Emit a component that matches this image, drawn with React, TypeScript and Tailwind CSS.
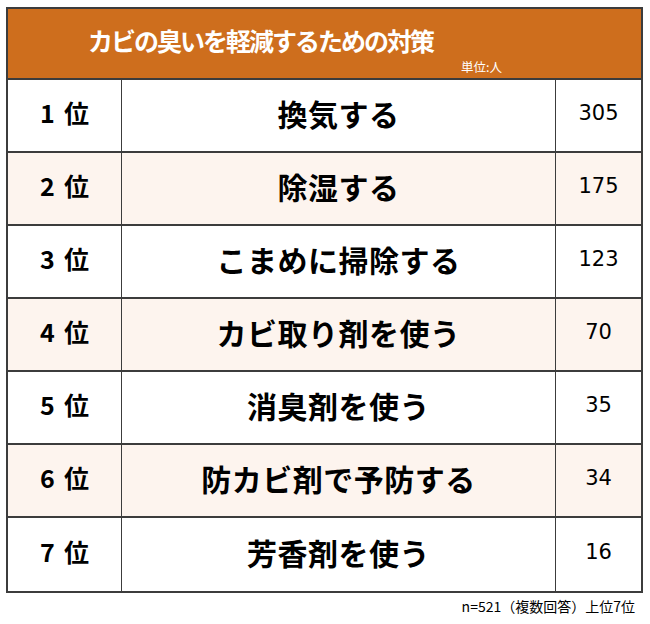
const rows = [
  { rank: 1, label: '換気する', count: 305 },
  { rank: 2, label: '除湿する', count: 175 },
  { rank: 3, label: 'こまめに掃除する', count: 123 },
  { rank: 4, label: 'カビ取り剤を使う', count: 70 },
  { rank: 5, label: '消臭剤を使う', count: 35 },
  { rank: 6, label: '防カビ剤で予防する', count: 34 },
  { rank: 7, label: '芳香剤を使う', count: 16 },
];

export default function App() {
  return (
    <div className="w-[650px] h-[624px] bg-white font-['Noto_Sans_CJK_JP',sans-serif] text-black">
      <div className="ml-[6px] pt-[7px] w-[637px]">
        <div className="border-2 border-[#3c3c3c]">
          {/* Header */}
          <div className="h-[71px] bg-[#ce6e1d] border-b-2 border-[#3c3c3c] flex flex-col text-white">
            <div className="mt-[15px] pl-[80px] h-[32px] leading-[32px] text-[25px] font-bold tracking-[-2px]">
              カビの臭いを軽減するための対策
            </div>
            <div className="mt-[4px] pr-[139px] text-right text-[12.5px] leading-[14px]">
              単位:人
            </div>
          </div>

          {/* Rows */}
          {rows.map((r, i) => (
            <div
              key={r.rank}
              className={`grid grid-cols-[114px_434px_1fr] h-[73px] ${
                i < rows.length - 1 ? 'border-b-2 border-[#3c3c3c]' : ''
              } ${i % 2 === 1 ? 'bg-[#fdf4ee]' : 'bg-white'}`}
            >
              <div className="flex items-center justify-center pb-[5px] border-r border-[#3c3c3c] text-[25px] font-bold">
                <span>{r.rank}</span>
                <span className="ml-[9px]">位</span>
              </div>
              <div className="flex items-center justify-center pb-[5px] border-r border-[#3c3c3c] text-[30px] font-bold tracking-[0.5px]">
                {r.label}
              </div>
              <div className="flex items-center justify-center pb-[3px] font-['DejaVu_Sans',sans-serif] text-[21px]">
                {r.count}
              </div>
            </div>
          ))}
        </div>
      </div>

      {/* Footer */}
      <div className="mt-[3px] pr-[15px] text-right text-[14px] leading-[20px]">
        n=521（複数回答）上位7位
      </div>
    </div>
  );
}
